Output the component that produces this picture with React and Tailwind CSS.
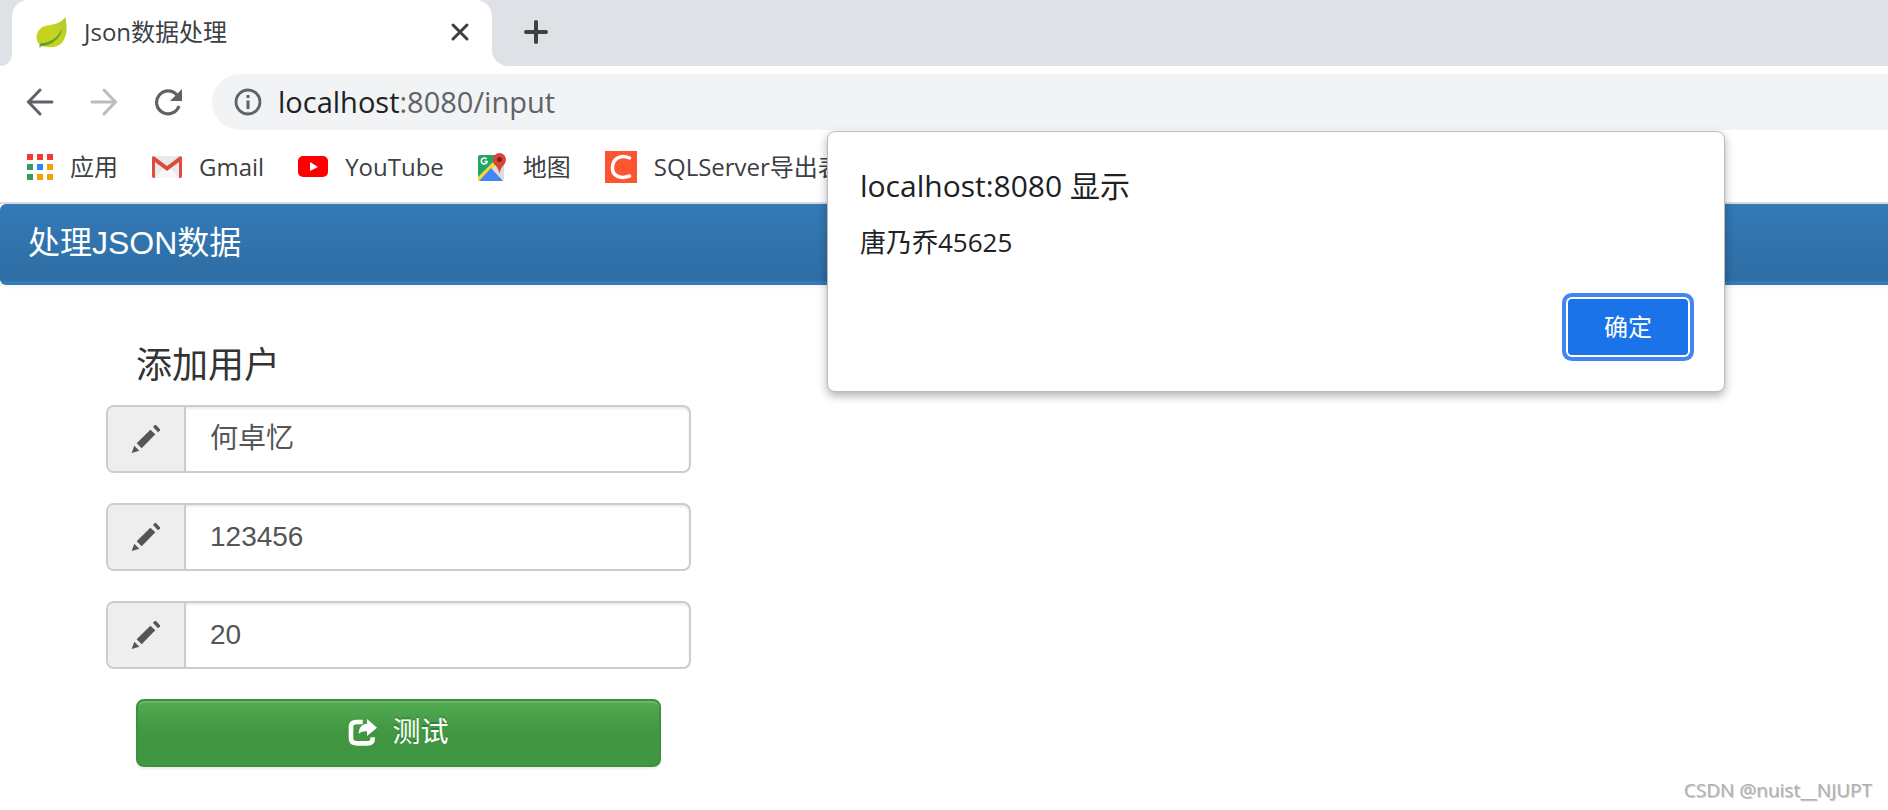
import { useState } from "react";

const UI = "font-['Open_Sans','Noto_Sans_CJK_SC',sans-serif]";

const LeafIcon = () => (
    <svg viewBox="0 0 34 34" className="size-8 shrink-0">
        <defs>
            <linearGradient id="leaf" x1="1" y1="0" x2="0" y2="1">
                <stop offset="0" stopColor="#a9c92f"/>
                <stop offset="0.5" stopColor="#c6d420"/>
                <stop offset="1" stopColor="#c3d022"/>
            </linearGradient>
        </defs>
        <path d="M31 1C33 8 34 20 28 28C24 34 14 34 6 32C-1 28 -1 18 5 13C11 8 25 11 31 1Z" fill="url(#leaf)"/>
        <path d="M4 34C3 31 4 29 6 29C16 28 23 23 28 13C26 24 18 30 7 32C5 32 5 33 4 34Z" fill="#5fa030"/>
    </svg>
)

const AppsIcon = () => {
    const colors = ['#f6382f', '#f6382f', '#f6382f', '#2f9e57', '#2188ff', '#f2a300', '#2f9e57', '#f2a300', '#f2a300'];
    return (
        <svg viewBox="0 0 26 26" className="size-[26px] shrink-0">
            {colors.map((color, i) => <rect key={i} x={(i % 3) * 10} y={Math.floor(i / 3) * 10} width="6" height="6" fill={color}/>)}
        </svg>
    )
}

const GmailIcon = () => (
    <svg viewBox="0 0 30 22" className="h-[22px] w-[30px] shrink-0">
        <rect width="30" height="22" rx="2" fill="#e9e9e9"/>
        <path d="M3 22L12 11L15 13L18 11L27 22Z" fill="#f6f6f6"/>
        <path d="M0 2C0 0 2 0 3 1L15 10L27 1C28 0 30 0 30 2V20C30 21 29 22 28 22H27V6L15 15L3 6V22H2C1 22 0 21 0 20Z" fill="#dc4b3e"/>
    </svg>
)

const YoutubeIcon = () => (
    <svg viewBox="0 0 30 22" className="h-[22px] w-[30px] shrink-0">
        <rect width="30" height="21" rx="5" fill="#ff0000"/>
        <path d="M12 6L20 11L12 15Z" fill="#fff"/>
    </svg>
)

const MapsIcon = () => (
    <svg viewBox="0 0 28 28" className="size-7 shrink-0">
        <rect y="2" width="26" height="26" rx="2" fill="#dcdcdc"/>
        <path d="M2 2H20L17 12L1 27L0 26V4C0 3 1 2 2 2Z" fill="#23a566"/>
        <path d="M0 24L15 9L17 13L2 28C1 28 0 27 0 26Z" fill="#fdd835"/>
        <path d="M13 15L25 28H1Z" fill="#4285f4"/>
        <path d="M8.500 6A3 3 0 1 0 9.200 8.500H6.500" fill="none" stroke="#fff" strokeWidth="1.500"/>
        <path d="M21.500 0A6.500 6.500 0 0 1 28 6.500C28 12 22.500 13 21.500 21C20.500 13 15 12 15 6.500A6.500 6.500 0 0 1 21.500 0Z" fill="#db4437"/>
        <circle cx="21.500" cy="6.500" r="2.500" fill="#7b231c"/>
    </svg>
)

const CsdnIcon = () => (
    <svg viewBox="0 0 32 32" className="size-8 shrink-0">
        <rect width="32" height="32" fill="#fc5531"/>
        <path d="M24.500 7C15 3 8 8 7.500 16C7 25 15 28.500 24.500 25" fill="none" stroke="#fff" strokeWidth="3.500" strokeLinecap="round"/>
    </svg>
)

const PencilIcon = () => (
    <svg viewBox="0 0 90 90" className="size-[30px]" fill="#555">
        <path d="M66 9L71 3H75L87 16V19L81 25Z"/>
        <path d="M58 17L73 31L32 73L17 58Z"/>
        <path d="M10 65L25 80L2 87Z"/>
    </svg>
)

const ShareIcon = () => (
    <svg viewBox="0 0 90 90" className="size-[30px]">
        <path d="M44 12H26Q9 12 9 27V61Q9 76 26 76H58Q74 76 74 62V58" fill="none" stroke="#fff" strokeWidth="14"/>
        <path d="M57 3L87 29L57 54V40C46 39 39 41 32 48C32 30 41 18 57 17Z" fill="#fff"/>
    </svg>
)

const bookmarks = [
    { name: '应用', icon: AppsIcon },
    { name: 'Gmail', icon: GmailIcon },
    { name: 'YouTube', icon: YoutubeIcon },
    { name: '地图', icon: MapsIcon },
    { name: 'SQLServer导出表', icon: CsdnIcon },
];

const TabStrip = () => (
    <div className="flex h-[66px] bg-[#dee1e6]">
        <div className="flex w-3 bg-white"><div className="grow rounded-br-xl bg-[#dee1e6]"></div></div>
        <div className="flex w-[480px] items-center rounded-t-2xl bg-white pr-[22px] pb-0.5 pl-6">
            <LeafIcon/>
            <span className="ml-4 grow text-2xl text-[#3c4043]">Json数据处理</span>
            <button aria-label="关闭">
                <svg viewBox="0 0 20 20" className="size-5" stroke="#3c4043" strokeWidth="3" strokeLinecap="round">
                    <path d="M3 3L17 17M17 3L3 17"/>
                </svg>
            </button>
        </div>
        <div className="flex grow bg-white">
            <div className="flex grow items-center rounded-bl-2xl bg-[#dee1e6] pb-0.5 pl-8">
                <button aria-label="新标签页">
                    <svg viewBox="0 0 24 24" className="size-6" stroke="#3c4043" strokeWidth="4" strokeLinecap="round">
                        <path d="M12 2V22M2 12H22"/>
                    </svg>
                </button>
            </div>
        </div>
    </div>
)

const Toolbar = () => (
    <div className="flex h-[72px] items-center pl-[26px]">
        <button aria-label="后退">
            <svg viewBox="0 0 28 28" className="size-7" fill="none" stroke="#5f6368" strokeWidth="3" strokeLinecap="round">
                <path d="M26 14H3M14 2L2.500 14L14 26"/>
            </svg>
        </button>
        <button aria-label="前进" className="ml-9">
            <svg viewBox="0 0 28 28" className="size-7" fill="none" stroke="#babcbe" strokeWidth="3" strokeLinecap="round">
                <path d="M2 14H25M14 2L25.500 14L14 26"/>
            </svg>
        </button>
        <button aria-label="重新加载" className="ml-9">
            <svg viewBox="0 0 28 28" className="size-7">
                <path d="M23 7A11.500 11.500 0 1 0 25 18" fill="none" stroke="#5f6368" strokeWidth="3.200"/>
                <path d="M28 1V13H16Z" fill="#5f6368"/>
            </svg>
        </button>
        <div className="ml-[30px] flex h-14 grow items-center rounded-l-full bg-[#f1f3f4] pl-[22px]">
            <svg viewBox="0 0 28 28" className="size-7 shrink-0">
                <circle cx="14" cy="14" r="12" fill="none" stroke="#5f6368" strokeWidth="2.800"/>
                <path d="M12.500 7H15.500V10H12.500ZM12.500 12.500H15.500V21H12.500Z" fill="#5f6368"/>
            </svg>
            <span className="ml-4 text-[29px] text-[#5f6368]"><span className="text-[#202124]">localhost</span>:8080/input</span>
        </div>
    </div>
)

const Bookmarks = () => (
    <div className="flex h-[66px] items-center gap-[34px] overflow-hidden border-b-2 border-[#dadce0] pb-1.5 pl-[27px] text-2xl whitespace-nowrap text-[#3c4043]">
        {bookmarks.map(({ name, icon: Icon }) =>
            <a key={name} href="#" className="flex items-center gap-[17px]"><Icon/>{name}</a>)}
    </div>
)

const Field = ({ label, value, onChange }) => (
    <label className="flex h-[68px] rounded-lg border-2 border-[#ccc]">
        <span className="flex w-[78px] items-center justify-center rounded-l-md border-r-2 border-[#ccc] bg-[#eee]"><PencilIcon/></span>
        <input aria-label={label} value={value} onChange={onChange}
            className="min-w-0 grow rounded-r-md px-6 text-[28px] text-[#555] shadow-[inset_0_2px_2px_rgba(0,0,0,0.075)] outline-none"/>
    </label>
)

const AlertDialog = ({ onClose }) => (
    <div role="alertdialog" aria-label="localhost:8080 显示"
        className={`absolute top-[131px] left-[827px] flex w-[898px] flex-col rounded-lg border border-[#bbb] bg-white pt-[30px] pr-[30px] pb-[30px] pl-8 text-[#202124] shadow-[0_4px_10px_rgba(0,0,0,0.3)] ${UI}`}>
        <div className="text-3xl leading-[48px]">localhost:8080 显示</div>
        <div className="mt-2 text-[26px] leading-[48px]">唐乃乔45625</div>
        <button onClick={onClose}
            className="mt-[33px] mr-[6px] mb-[6px] h-14 w-[120px] self-end rounded bg-[#1a73e8] text-2xl text-white shadow-[0_0_0_2px_#fff,0_0_0_6px_#4285f4]">确定</button>
    </div>
)

const App = () => {

    const [user, setUser] = useState({ name: '何卓忆', password: '123456', age: '20' });
    const [open, setOpen] = useState(true);

    const update = (key) => (e) => setUser({ ...user, [key]: e.target.value });

    return (
        <div className="relative flex min-h-screen flex-col overflow-hidden bg-white">
            <header className={UI}>
                <TabStrip/>
                <Toolbar/>
                <Bookmarks/>
            </header>
            <main className="flex grow flex-col font-['Liberation_Sans','Noto_Sans_CJK_SC',sans-serif]">
                <nav className="flex h-[81px] items-center rounded-l-md border-b-4 border-[#337ab7] bg-linear-to-b from-[#337ab7] to-[#2e6da4] pl-7 shadow-[0_2px_4px_rgba(0,0,0,0.05)]">
                    <a href="#" className="text-[32px] text-white">处理JSON数据</a>
                </nav>
                <form onSubmit={(e) => { e.preventDefault(); setOpen(true); }} className="mt-[57px] ml-[106px] flex w-[585px] flex-col gap-[30px]">
                    <h3 className="-mb-[15px] ml-[30px] text-4xl leading-12 text-[#333]">添加用户</h3>
                    <Field label="用户名" value={user.name} onChange={update('name')}/>
                    <Field label="密码" value={user.password} onChange={update('password')}/>
                    <Field label="年龄" value={user.age} onChange={update('age')}/>
                    <button className="mx-[30px] flex h-[68px] items-center justify-center gap-3.5 rounded-lg border-2 border-[#3e8f3e] bg-linear-to-b from-[#52ab52] to-[#419641] to-50% text-[28px] text-white shadow-[inset_0_2px_0_rgba(255,255,255,0.15),0_2px_2px_rgba(0,0,0,0.075)] text-shadow-[0_-2px_0_rgba(0,0,0,0.2)]">
                        <ShareIcon/>测试
                    </button>
                </form>
            </main>
            <footer className={`absolute right-4 bottom-1.5 text-[19px] text-[#b0b0b0] text-shadow-[1px_1px_0_rgba(120,120,120,0.4)] ${UI}`}>CSDN @nuist__NJUPT</footer>
            {open && <AlertDialog onClose={() => setOpen(false)}/>}
        </div>
    )
}

export default App;
